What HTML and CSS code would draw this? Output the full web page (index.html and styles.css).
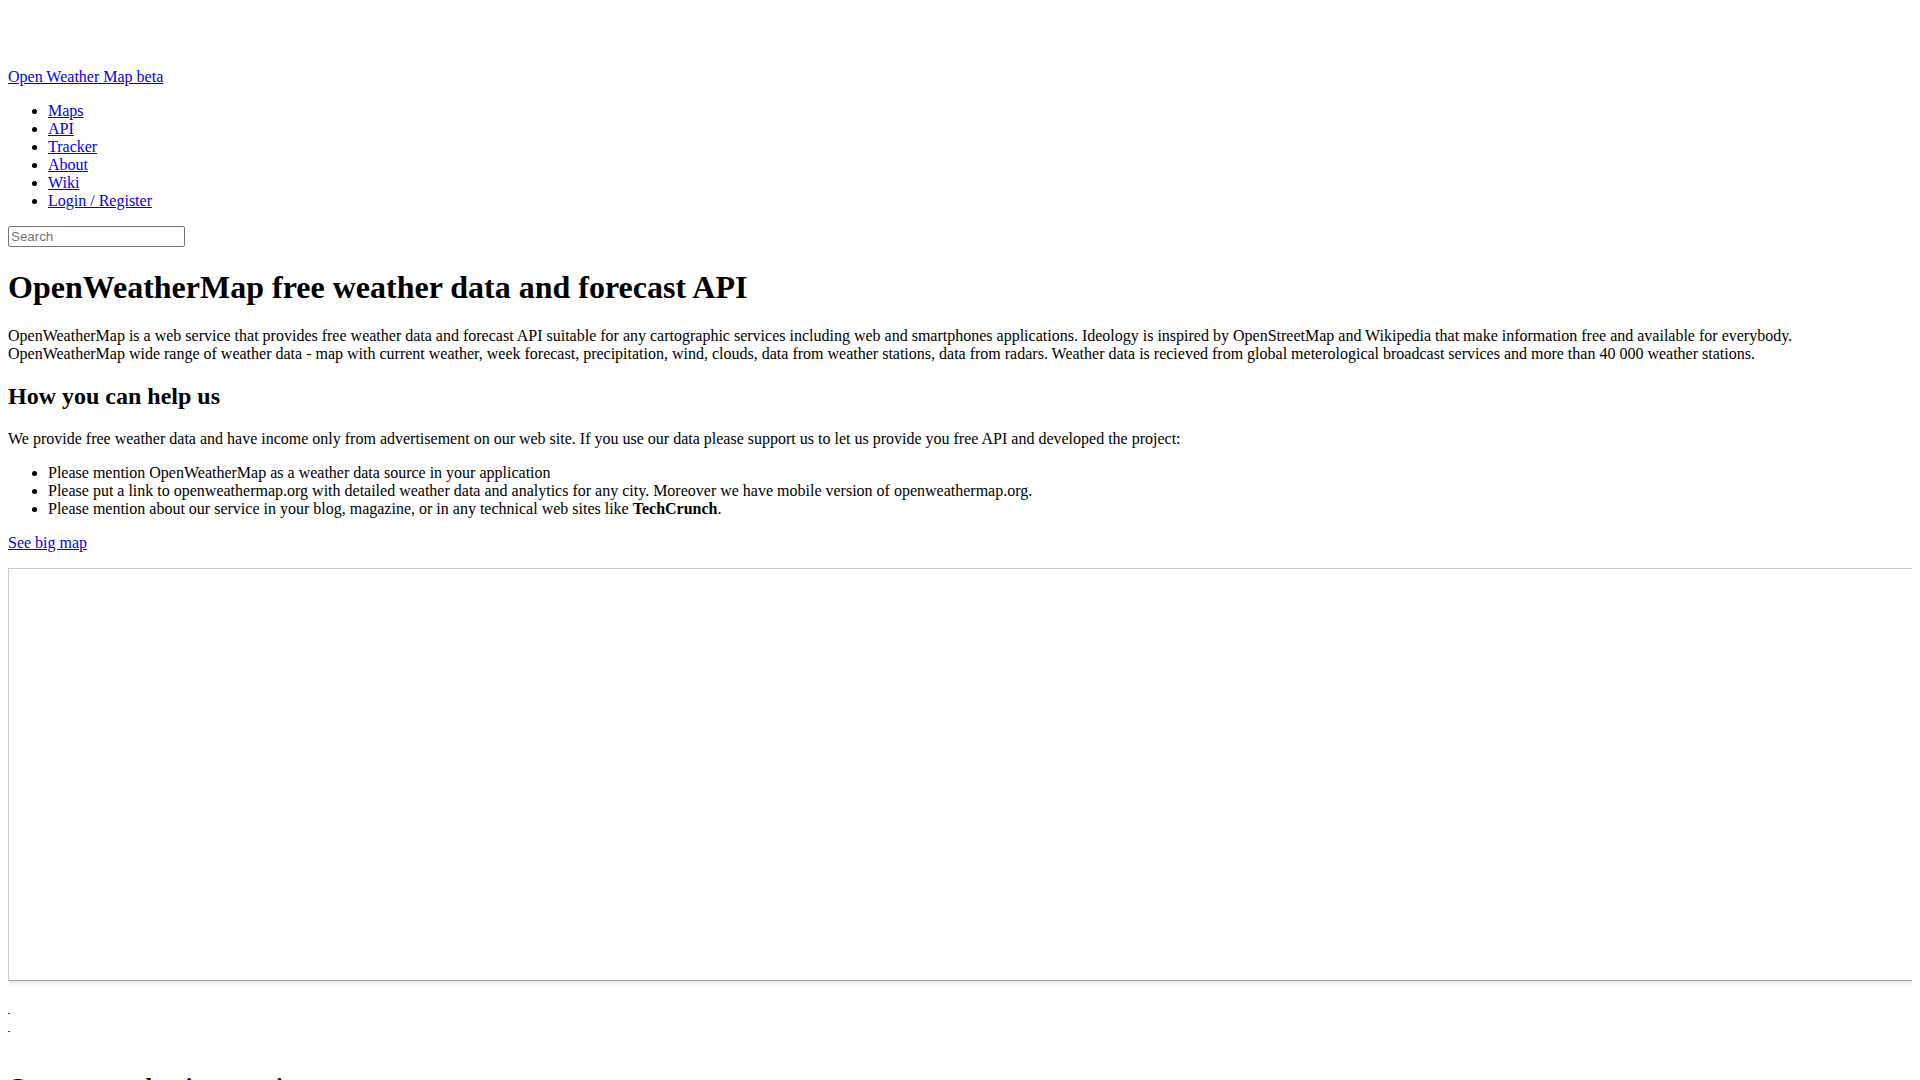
FILE: index.html
```html
<!DOCTYPE html>
<html lang="en">
<head>
<meta charset="utf-8">
<title>OpenWeatherMap</title>
<link rel="stylesheet" href="styles.css">
</head>
<body>
<header class="site-header">
  <div class="brand"><a href="#">Open Weather Map beta</a></div>
  <ul class="nav">
    <li><a href="#">Maps</a></li>
    <li><a href="#">API</a></li>
    <li><a href="#">Tracker</a></li>
    <li><a href="#">About</a></li>
    <li><a href="#">Wiki</a></li>
    <li><a href="#">Login / Register</a></li>
  </ul>
  <form class="search-form">
    <input class="search-input" type="text" placeholder="Search">
  </form>
</header>
<main class="content">
  <h1 class="title">OpenWeatherMap free weather data and forecast API</h1>
  <p class="intro">OpenWeatherMap is a web service that provides free weather data and forecast API suitable for any cartographic services including web and smartphones applications. Ideology is inspired by OpenStreetMap and Wikipedia that make information free and available for everybody.<br>OpenWeatherMap wide range of weather data - map with current weather, week forecast, precipitation, wind, clouds, data from weather stations, data from radars. Weather data is recieved from global meterological broadcast services and more than 40 000 weather stations.</p>
  <h2 class="subtitle">How you can help us</h2>
  <p class="text">We provide free weather data and have income only from advertisement on our web site. If you use our data please support us to let us provide you free API and developed the project:</p>
  <ul class="help-list">
    <li>Please mention OpenWeatherMap as a weather data source in your application</li>
    <li>Please put a link to openweathermap.org with detailed weather data and analytics for any city. Moreover we have mobile version of openweathermap.org.</li>
    <li>Please mention about our service in your blog, magazine, or in any technical web sites like <b>TechCrunch</b>.</li>
  </ul>
  <p class="text"><a href="#">See big map</a></p>
  <div class="map"></div>
  <div class="tiny-block">
    <div class="tiny-row"><a class="tiny-link" href="#"></a></div>
    <div class="tiny-row"><a class="tiny-link" href="#"></a></div>
  </div>
  <h2 class="subtitle bottom-title">Current weather in your city</h2>
</main>
</body>
</html>
```
FILE: styles.css
```css
html {
  overflow: hidden;
}
body {
  margin: 8px;
  font-family: "Liberation Serif", "Times New Roman", serif;
  font-size: 16px;
  color: #000;
  background: #fff;
}
a {
  color: #0000ee;
}
.site-header {
  padding-top: 60px;
}
.nav {
  margin: 16px 0;
  padding-left: 40px;
}
.search-form {
  margin: 0;
}
.search-input {
  display: block;
  width: 177px;
  height: 21px;
  box-sizing: border-box;
  margin: 0;
  padding: 1px 2px;
  font-family: "Liberation Sans", Arial, sans-serif;
  font-size: 13.333px;
  border: 1px solid #767676;
  border-radius: 2px;
}
.search-input::placeholder {
  color: #757575;
}
.title {
  font-size: 32px;
  font-weight: bold;
  margin: 22px 0 21.44px;
}
.intro,
.text {
  margin: 16px 0;
}
.subtitle {
  font-size: 24px;
  font-weight: bold;
  margin: 19.92px 0;
}
.help-list {
  margin: 16px 0;
  padding-left: 40px;
}
.map {
  width: 2000px;
  height: 411px;
  border: 1px solid #cccccc;
  border-bottom-color: #a0a0a0;
  background: #ffffff;
  box-shadow: 0 2px 4px rgba(0, 0, 0, 0.1);
  margin-top: 16px;
}
.tiny-block {
  margin-top: 19px;
}
.tiny-row {
  height: 18px;
  line-height: 18px;
}
.tiny-link {
  display: inline-block;
  width: 2px;
  height: 13px;
  border-bottom: 1px solid #2a3f8a;
  vertical-align: baseline;
}
.bottom-title {
  margin-top: 37px;
}
```
